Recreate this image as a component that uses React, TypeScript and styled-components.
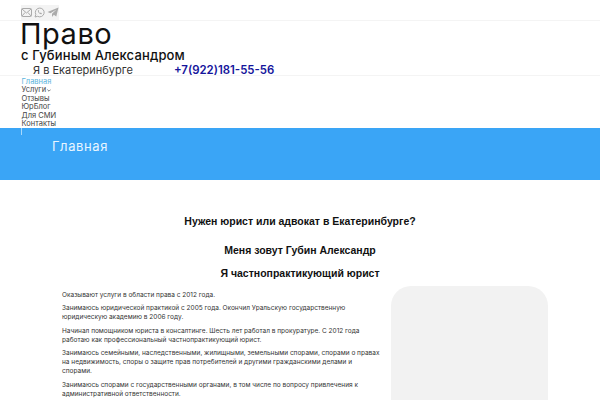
import React from "react"
import styled, { createGlobalStyle } from "styled-components"

const GlobalStyle = createGlobalStyle`
  html, body {
    margin: 0;
    padding: 0;
    background: #fff;
    overflow: hidden;
  }
  body {
    font-family: "Liberation Sans", Arial, sans-serif;
    color: #222;
  }
`

const TopBar = styled.div`
  height: 21px;
  box-sizing: border-box;
  padding: 3px 0 0 21px;
  border-bottom: 1px solid #f4f4f4;
`
const Icons = styled.div`
  display: inline-flex;
  gap: 2px;
  height: 15px;
  align-items: center;
  background: #f3f3f3;
  color: #aaa;
`
const Header = styled.header`
  height: 54px;
  padding-left: 20px;
  border-bottom: 1px solid #f4f4f4;
  font-family: Inter, "Noto Sans", sans-serif;
  color: #111;
`
const Brand = styled.div`
  font-size: 29px;
  line-height: 25px;
  letter-spacing: 0.5px;
`
const Sub = styled.div`
  font-size: 13px;
  font-weight: 500;
  line-height: 16px;
  letter-spacing: 0.15px;
  margin: 1px 0 0 1px;
`
const InfoRow = styled.div`
  display: flex;
  align-items: baseline;
  padding-left: 13px;
`
const City = styled.div`
  width: 141px;
  font-size: 11px;
  line-height: 14px;
  color: #333;
`
const Phone = styled.div`
  font-size: 11.4px;
  font-weight: 600;
  color: #15159c;
`
const Nav = styled.nav`
  display: flex;
  flex-direction: column;
  height: 52px;
  padding: 1.5px 0 0 21.5px;
  box-sizing: border-box;
  font-family: Inter, "Noto Sans", sans-serif;
  font-size: 7.5px;
  line-height: 8.6px;
`
const NavItem = styled.a<{ $active?: boolean }>`
  display: flex;
  align-items: center;
  gap: 1px;
  color: ${(p) => (p.$active ? "#5bb4dc" : "#444")};
  height: 8.6px;
`
const Band = styled.div`
  position: relative;
  height: 52px;
  box-sizing: border-box;
  padding: 0 0 16px 52px;
  background: #3aa5f6;
  color: #e8f5ff;
  display: flex;
  align-items: center;
  font-family: Inter, "Noto Sans", sans-serif;
  font-size: 13px;
  letter-spacing: 0.6px;

  &::before {
    content: "";
    position: absolute;
    left: 21px;
    top: 0;
    width: 1px;
    height: 7px;
    background: #a8d8fb;
  }
`
const Main = styled.main`
  padding: 34px 0 0;
`
const Heading = styled.h2<{ $gap: number }>`
  margin: 0 0 ${(p) => p.$gap}px;
  text-align: center;
  font-size: 10.5px;
  line-height: 14px;
  font-weight: 700;
  color: #111;
`
const Columns = styled.div`
  display: flex;
`
const Text = styled.div`
  width: 318px;
  padding: 5px 0 0 62px;
  font-family: Inter, "Noto Sans", sans-serif;
  font-size: 6.5px;
  line-height: 9.2px;
  color: #333;
`
const Para = styled.p`
  margin: 0 0 4px;
`
const Photo = styled.div`
  width: 157px;
  height: 200px;
  margin: 0 0 0 11px;
  background: #f2f2f2;
  border-radius: 20px;
`

const App = () => (
  <>
    <GlobalStyle />
    <TopBar>
      <Icons>
        <svg width="11" height="9" viewBox="0 0 11 9" fill="none" stroke="currentColor">
          <rect x="0.5" y="0.5" width="10" height="8" rx="1" />
          <path d="M1 1l4.500 4L10 1M1 8l3-3.500M10 8L7 4.500" />
        </svg>
        <svg width="11" height="11" viewBox="0 0 11 11" fill="none" stroke="currentColor">
          <path d="M1 10l.8-2.600A4.400 4.400 0 1 1 3.600 9.300z" />
          <path d="M3.800 3.500c0 2 1.700 3.700 3.700 3.700l.4-1-1.200-.6-.5.500c-.7-.3-1.200-.8-1.500-1.500l.5-.5-.6-1.200z" fill="currentColor" stroke="none" />
        </svg>
        <svg width="12" height="11" viewBox="0 0 12 11" fill="currentColor">
          <path d="M11.500.5L.5 5l3 1.200L9.500 2.500 5 6.800V10l1.800-2.200L9.300 9.500z" />
        </svg>
      </Icons>
    </TopBar>
    <Header>
      <Brand>Право</Brand>
      <Sub>с Губиным Александром</Sub>
      <InfoRow>
        <City>Я в Екатеринбурге</City>
        <Phone>+7(922)181-55-56</Phone>
      </InfoRow>
    </Header>
    <Nav>
      <NavItem $active>Главная</NavItem>
      <NavItem>
        Услуги
        <svg width="4" height="3" viewBox="0 0 4 3" fill="none" stroke="currentColor" strokeWidth="0.7">
          <path d="M.4.6L2 2.200 3.600.6" />
        </svg>
      </NavItem>
      <NavItem>Отзывы</NavItem>
      <NavItem>ЮрБлог</NavItem>
      <NavItem>Для СМИ</NavItem>
      <NavItem>Контакты</NavItem>
    </Nav>
    <Band>Главная</Band>
    <Main>
      <Heading $gap={15}>Нужен юрист или адвокат в Екатеринбурге?</Heading>
      <Heading $gap={9}>Меня зовут Губин Александр</Heading>
      <Heading $gap={6}>Я частнопрактикующий юрист</Heading>
      <Columns>
        <Text>
          <Para>Оказывают услуги в области права с 2012 года.</Para>
          <Para>Занимаюсь юридической практикой с 2005 года. Окончил Уральскую государственную юридическую академию в 2006 году.</Para>
          <Para>Начинал помощником юриста в консалтинге. Шесть лет работал в прокуратуре. С 2012 года работаю как профессиональный частнопрактикующий юрист.</Para>
          <Para>Занимаюсь семейными, наследственными, жилищными, земельными спорами, спорами о правах на недвижимость, споры о защите прав потребителей и другими гражданскими делами и спорами.</Para>
          <Para>Занимаюсь спорами с государственными органами, в том числе по вопросу привлечения к административной ответственности.</Para>
        </Text>
        <Photo />
      </Columns>
    </Main>
  </>
)

export default App
